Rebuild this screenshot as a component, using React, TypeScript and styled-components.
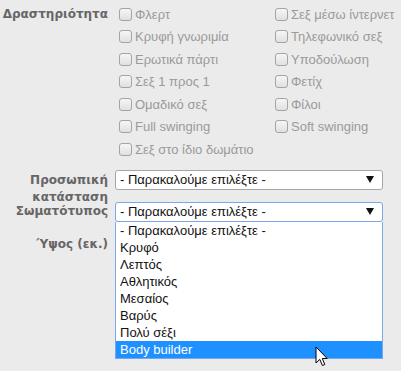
import React from "react";
import styled, { createGlobalStyle } from "styled-components";

const Global = createGlobalStyle`
  html, body { margin: 0; padding: 0; background: #ebebeb; }
  body { font-family: "Liberation Sans", Arial, sans-serif; font-size: 13px; }
`;

const Page = styled.div`
  position: relative;
  width: 401px;
  height: 371px;
  overflow: hidden;
  background: #ebebeb;
  padding-top: 3px;
  box-sizing: border-box;
`;

const Form = styled.div`
  display: flex;
  flex-direction: column;
`;

const Row = styled.div<{ $h?: number; $mt?: number }>`
  display: grid;
  grid-template-columns: 108px 268px;
  column-gap: 7px;
  height: ${(p) => (p.$h ? `${p.$h}px` : "auto")};
  margin-top: ${(p) => p.$mt ?? 0}px;
`;

const Label = styled.div<{ $pt?: number }>`
  text-align: right;
  font-family: "DejaVu Sans", Verdana, sans-serif;
  font-weight: bold;
  color: #666;
  font-size: 12px;
  line-height: 17px;
  padding-top: ${(p) => p.$pt ?? 2}px;
  white-space: normal;
  overflow: visible;
`;

const CheckGrid = styled.div`
  display: grid;
  grid-template-columns: 156px 120px;
  grid-auto-rows: 22.5px;
`;

const CheckItem = styled.label`
  display: flex;
  align-items: center;
  gap: 3px;
  color: #9a9a9a;
  font-size: 13px;
  white-space: nowrap;
`;

const Box = styled.input`
  appearance: none;
  flex-shrink: 0;
  margin: 0 0 0 4px;
  width: 13px;
  height: 13px;
  box-sizing: border-box;
  border: 1px solid #a4a4a4;
  border-radius: 3px;
  background: linear-gradient(#f6f6f6, #e0e0e0);
`;

const SelectWrap = styled.div`
  position: relative;
  width: 268px;
`;

const SelectBox = styled.div<{ $focus?: boolean }>`
  box-sizing: border-box;
  height: 20px;
  width: 268px;
  display: flex;
  align-items: center;
  justify-content: space-between;
  padding: 0 8px 0 4px;
  background: #fff;
  border: 1px solid ${(p) => (p.$focus ? "#7aa7e6" : "#a6a6a6")};
  border-radius: 3px;
  color: #111;
  font-size: 13px;
`;

const Arrow = styled.span`
  width: 0;
  height: 0;
  border-left: 4px solid transparent;
  border-right: 4px solid transparent;
  border-top: 7px solid #111;
`;

const ListBox = styled.ul`
  position: absolute;
  top: 20px;
  left: 0;
  width: 268px;
  box-sizing: border-box;
  margin: 0;
  padding: 0;
  list-style: none;
  background: #fff;
  border: 1px solid #7aa7e6;
  border-top: none;
  z-index: 5;
`;

const Option = styled.li<{ $active?: boolean }>`
  height: 17px;
  line-height: 17px;
  padding-left: 4px;
  font-size: 13px;
  color: ${(p) => (p.$active ? "#fff" : "#111")};
  background: ${(p) => (p.$active ? "#1e90ff" : "transparent")};
`;

const Cursor = styled.svg`
  position: absolute;
  left: 315px;
  top: 346px;
  z-index: 10;
`;

const activities: [string, string | null][] = [
  ["Φλερτ", "Σεξ μέσω ίντερνετ"],
  ["Κρυφή γνωριμία", "Τηλεφωνικό σεξ"],
  ["Ερωτικά πάρτι", "Υποδούλωση"],
  ["Σεξ 1 προς 1", "Φετίχ"],
  ["Ομαδικό σεξ", "Φίλοι"],
  ["Full swinging", "Soft swinging"],
  ["Σεξ στο ίδιο δωμάτιο", null],
];

const bodyTypes = [
  "- Παρακαλούμε επιλέξτε -",
  "Κρυφό",
  "Λεπτός",
  "Αθλητικός",
  "Μεσαίος",
  "Βαρύς",
  "Πολύ σέξι",
  "Body builder",
];

const placeholder = "- Παρακαλούμε επιλέξτε -";

export default function App() {
  return (
    <Page>
      <Global />
      <Form>
        <Row>
          <Label $pt={3}>Δραστηριότητα</Label>
          <CheckGrid>
            {activities.flatMap(([a, b], i) => [
              <CheckItem key={`a${i}`}>
                <Box type="checkbox" />
                {a}
              </CheckItem>,
              b ? (
                <CheckItem key={`b${i}`}>
                  <Box type="checkbox" />
                  {b}
                </CheckItem>
              ) : (
                <span key={`b${i}`} />
              ),
            ])}
          </CheckGrid>
        </Row>
        <Row $h={32} $mt={9}>
          <Label>Προσωπική κατάσταση</Label>
          <SelectWrap>
            <SelectBox>
              <span>{placeholder}</span>
              <Arrow />
            </SelectBox>
          </SelectWrap>
        </Row>
        <Row $h={32}>
          <Label $pt={1}>Σωματότυπος</Label>
          <SelectWrap>
            <SelectBox $focus>
              <span>{placeholder}</span>
              <Arrow />
            </SelectBox>
            <ListBox role="listbox">
              {bodyTypes.map((t, i) => (
                <Option key={t} $active={i === bodyTypes.length - 1}>
                  {t}
                </Option>
              ))}
            </ListBox>
          </SelectWrap>
        </Row>
        <Row $h={32}>
          <Label>Ύψος (εκ.)</Label>
          <SelectWrap>
            <SelectBox>
              <span>{placeholder}</span>
              <Arrow />
            </SelectBox>
          </SelectWrap>
        </Row>
      </Form>
      <Cursor width="14" height="22" viewBox="0 0 14 22">
        <path
          d="M1 1 L1 17 L4.8 13.4 L7.4 19.5 L9.8 18.5 L7.3 12.5 L12.2 12.5 Z"
          fill="#fff"
          stroke="#000"
          strokeWidth="1"
          strokeLinejoin="miter"
        />
      </Cursor>
    </Page>
  );
}
